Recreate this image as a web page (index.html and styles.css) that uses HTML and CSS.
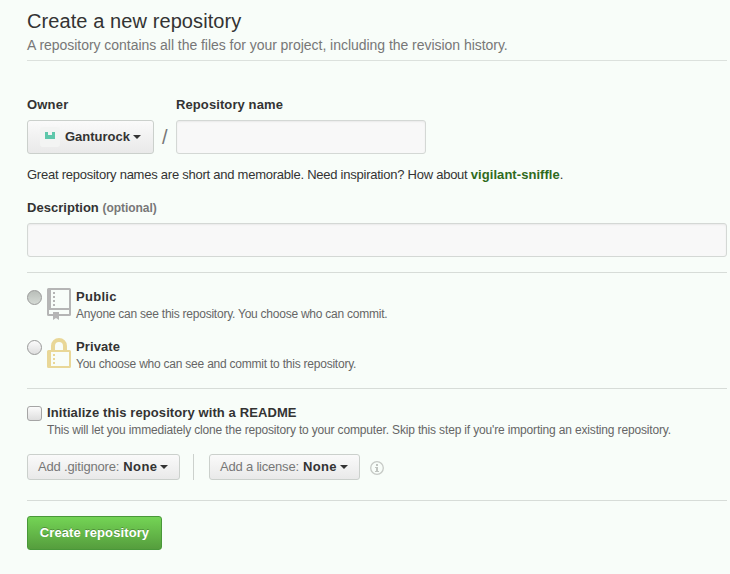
FILE: index.html
```
<!DOCTYPE html>
<html lang="en">
<head>
<meta charset="utf-8">
<title>Create a new repository</title>
<link rel="stylesheet" href="styles.css">
</head>
<body>
<main class="page">
  <header class="head">
    <h1><span class="t-title">Create a new repository</span></h1>
    <p><span class="t-lead">A repository contains all the files for your project, including the revision history.</span></p>
  </header>
  <form>
    <section class="names">
      <div class="owner">
        <div class="label t-owner">Owner</div>
        <button type="button" class="btn owner-btn">
          <svg class="avatar" width="20" height="20" viewBox="0 0 20 20"><rect width="20" height="20" rx="3" fill="#f3f4f3"/><path d="M5 5h3v3h4V5h3v7H5z" fill="#5fc7ab"/></svg>
          <b class="t-user">Ganturock</b><i class="caret"></i>
        </button>
      </div>
      <span class="slash">/</span>
      <div class="repo">
        <label class="label t-repo" for="name">Repository name</label>
        <input id="name" class="field" type="text">
      </div>
    </section>
    <p class="hint"><span class="t-hint">Great repository names are short and memorable. Need inspiration? How about </span><b class="t-link">vigilant-sniffle</b>.</p>
    <label class="label desc-label" for="desc"><span class="t-desc">Description</span> <span class="optional">(optional)</span></label>
    <input id="desc" class="field" type="text">

    <section class="visibility">
      <div class="choice">
        <span class="radio pressed"></span>
        <svg class="icon" width="24" height="32" viewBox="0 0 24 32"><path fill="#b5b5b5" fill-rule="evenodd" d="M1.500 0h21Q24 0 24 1.500V26.500Q24 28 22.500 28H12v4l-3-2-3 2v-4H1.500Q0 28 0 26.500V1.500Q0 0 1.500 0zM4 2v18h18V2zM2 22v4h4v-2h6v2h10v-4zM6 4h2v2H6zM6 8h2v2H6zM6 12h2v2H6zM6 16h2v2H6z"/></svg>
        <div class="copy"><b class="t-public">Public</b><small class="t-psub">Anyone can see this repository. You choose who can commit.</small></div>
      </div>
      <div class="choice">
        <span class="radio"></span>
        <svg class="icon" width="24" height="32" viewBox="0 0 24 32"><path fill="#e9d797" fill-rule="evenodd" d="M4 12V8a8 8 0 0 1 16 0v4h2.500q1.500 0 1.500 1.500v15q0 1.500-1.500 1.500h-21Q0 30 0 28.500v-15Q0 12 1.500 12zM8 12h8V8a4 4 0 0 0-8 0zM4 14v14h18V14zM6 16h2v2H6zM6 20h2v2H6zM6 24h2v2H6z"/></svg>
        <div class="copy"><b class="t-private">Private</b><small class="t-vsub">You choose who can see and commit to this repository.</small></div>
      </div>
    </section>

    <section class="init">
      <div class="choice">
        <span class="check"></span>
        <div class="copy"><b class="t-init">Initialize this repository with a README</b><small class="t-isub">This will let you immediately clone the repository to your computer. Skip this step if you're importing an existing repository.</small></div>
      </div>
      <div class="selects">
        <button type="button" class="btn ignore"><span class="t-ign">Add .gitignore:</span><b class="t-none">None</b><i class="caret"></i></button>
        <span class="divider"></span>
        <button type="button" class="btn license"><span class="t-lic">Add a license:</span><b class="t-none">None</b><i class="caret"></i></button>
        <svg class="info" width="14" height="14" viewBox="0 0 14 14"><circle cx="7" cy="7" r="6.300" fill="none" stroke="#c6cac6" stroke-width="1.300"/><path fill="#c0c4c0" d="M6 3h2v2H6zM5 6h3v4h1v1H5v-1h1V7H5z"/></svg>
      </div>
    </section>
    <button type="button" class="submit"><span class="t-submit">Create repository</span></button>
  </form>
</main>
</body>
</html>
```
FILE: styles.css
```
* { box-sizing: border-box; }
body { margin: 0; background: #f8fdf9; color: #333; font: 13px/18px "Liberation Sans", Arial, sans-serif; }
h1, p { margin: 0; font-weight: normal; }
button, input { font: inherit; }
.page { padding: 9px 3px 0 27px; height: 574px; overflow: hidden; }
.head { height: 52px; border-bottom: 1px solid #dce1dd; }
.head h1 { font-size: 20px; line-height: 24px; }
.head p { margin-top: 2px; font-size: 14px; line-height: 20px; color: #777; }
.names { display: flex; align-items: flex-end; margin-top: 35px; height: 58px; }
.label { display: block; height: 24px; font-weight: bold; white-space: nowrap; }
.owner { width: 127px; }
.repo { width: 250px; }
.slash { width: 22px; height: 34px; padding-left: 8px; font-size: 20px; line-height: 34px; color: #777; }
.field { display: block; width: 100%; height: 34px; margin: 0; border: 1px solid #d4d8d5; border-radius: 3px; background: #f8f8f8; box-shadow: inset 0 1px 2px rgba(0,0,0,.06); outline: 0; }
.btn { display: flex; align-items: center; height: 26px; padding: 0 0 1px 10px; border: 1px solid #cbd0cc; border-radius: 3px; background: linear-gradient(#fafafa, #e9e9e9); color: #777; white-space: nowrap; }
.btn b { color: #333; }
.owner-btn { width: 127px; height: 34px; padding-left: 12px; }
.avatar { margin-right: 5px; }
.caret { margin-left: 3px; border: 4px solid transparent; border-top-color: #333; border-bottom: 0; }
.hint { margin-top: 12px; white-space: nowrap; }
.hint b { color: #2f6a1c; }
.desc-label { margin-top: 15px; }
.optional { font-size: 12px; letter-spacing: -.05px; color: #777; }
.visibility { height: 116px; margin-top: 15px; padding-top: 15px; border-top: 1px solid #d7dcd8; }
.choice { display: flex; height: 50px; white-space: nowrap; }
.radio { width: 15px; height: 15px; margin: 2px 5px 0 0; border: 1px solid #999; border-radius: 50%; background: linear-gradient(#fbfbfb, #dedede); }
.pressed { background: linear-gradient(#b9beb9, #d5dad5); }
.icon { margin: 0 5px 0 0; }
.copy b, .copy small { display: block; }
.copy small { font-size: 12px; line-height: 16px; color: #666; }
.init { height: 113px; padding-top: 15px; border: solid #d7dcd8; border-width: 1px 0; }
.init .choice { height: 50px; }
.check { width: 15px; height: 15px; margin: 2px 5px 0 0; border: 1px solid #a5a5a5; border-radius: 3px; background: linear-gradient(#fbfbfb, #dedede); }
.selects { display: flex; align-items: center; height: 26px; }
.ignore { width: 153px; }
.license { width: 151px; }
.btn span { margin-right: 4px; }
.divider { width: 1px; height: 26px; margin: 0 15px 0 13px; background: #ccd1cd; }
.info { margin: 2px 0 0 10px; }
.submit { display: block; width: 135px; height: 34px; margin-top: 15px; padding: 0 0 1px; border: 1px solid #499839; border-radius: 3px; background: linear-gradient(#74d455, #559d3d); color: #fff; font-weight: bold; text-shadow: 0 -1px 0 rgba(0,0,0,.25); white-space: nowrap; }

.t-title { letter-spacing: .09px; }
.t-lead { letter-spacing: -.036px; }
.t-owner { letter-spacing: .2px; }
.t-repo, .t-init, .t-submit { letter-spacing: .1px; }
.t-desc { letter-spacing: .03px; }
.t-hint { letter-spacing: -.245px; }
.t-link { letter-spacing: .05px; }
.t-public { letter-spacing: .3px; }
.t-private { letter-spacing: .1px; }
.t-psub { letter-spacing: -.24px; }
.t-vsub { letter-spacing: -.226px; }
.t-isub { letter-spacing: -.161px; }
.t-ign { letter-spacing: -.17px; }
.t-lic { letter-spacing: -.2px; }
.t-none { letter-spacing: .4px; }
```
